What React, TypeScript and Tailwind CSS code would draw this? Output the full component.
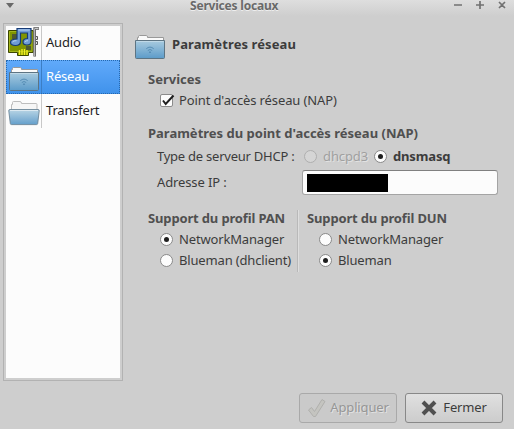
import React from "react";

function Folder({ network = false, open = false }: { network?: boolean; open?: boolean }) {
  return (
    <svg width="32" height="26" viewBox="0 0 32 26" className="block shrink-0">
      <defs>
        <linearGradient id="folderBlue" x1="0" y1="0" x2="0" y2="1">
          <stop offset="0" stopColor="#a9cbdf" />
          <stop offset="1" stopColor="#5c9bc9" />
        </linearGradient>
        <linearGradient id="openBlue" x1="0" y1="0" x2="0" y2="1">
          <stop offset="0" stopColor="#b9d5e5" />
          <stop offset="1" stopColor="#649fcb" />
        </linearGradient>
      </defs>
      {open ? (
        <>
          <path d="M3.500 10V4.500H4.500V2.500Q4.500 1.500 5.500 1.500H12Q13.500 1.500 13.500 3.500H28Q29 3.500 29 4.500V10" fill="#f6f6f6" stroke="#bdbdbd" />
          <path d="M.8 11Q.5 9.500 2 9.500H30Q31.500 9.500 31.200 11L29.700 23.500Q29.600 24.600 28.500 24.600H3.500Q2.400 24.600 2.300 23.500Z" fill="url(#openBlue)" stroke="#6c8697" strokeWidth=".9" />
          <path d="M2 10.500H30" stroke="#dbe9f1" />
        </>
      ) : (
        <>
          <path d="M3.500 7V3.500H4.500V2.500Q4.500 1.500 5.500 1.500H12.500Q13.500 1.500 13.500 3.500H29.500V7Z" fill="#fafafa" stroke="#999" />
          <path d="M1.500 6.500H30.500V23.500Q30.500 24.500 29.500 24.500H2.500Q1.500 24.500 1.500 23.500Z" fill="url(#folderBlue)" stroke="#5d7483" />
          <path d="M2.500 7.500H29.500" stroke="#c0d9e7" />
        </>
      )}
      {network && (
        <g fill="none" stroke="#5088b0" strokeWidth=".9">
          <path d="M12.300 14.700Q16 11.500 19.700 14.700M13.800 16.500Q16 14.500 18.200 16.500" />
          <circle cx="16" cy="18.200" r=".5" fill="#5088b0" />
        </g>
      )}
    </svg>
  );
}

function SoundCard() {
  return (
    <svg width="33" height="32" viewBox="0 0 33 32" className="block shrink-0">
      <path d="M1.500 3.500H26V25.500H21.500V28.500H10.500V25.500H1.500Z" fill="#819500" stroke="#3c4600" />
      <path d="M2.500 4.500H25V24.500H2.500Z" fill="none" stroke="#a3b51b" />
      <path d="M5 7H11V12H5ZM19 19H24V23H19Z" fill="#4f5930" />
      <path d="M12.500 23V28M15 22V28M17.500 22V28M20 23V28" stroke="#f3ef22" strokeWidth="1.400" />
      <path d="M10 1.500H24V14.500Q24 18 20 18Q16 18 16 15Q16 11.500 20.500 11.500V6H13.500V14.500Q13.500 18.500 8.500 18.500Q3.500 18.500 3.500 15.300Q3.500 12 10 12Z" fill="#6e9bd5" stroke="#173b76" strokeWidth="1.200" />
      <path d="M11.300 3H22.800M5.500 15Q6.500 13.500 9.500 13.700M17.700 15Q18.700 13.500 21 13.700" stroke="#b9d3f3" fill="none" />
      <path d="M32 1.500H27.700V29.500" fill="none" stroke="#555" strokeWidth="2.600" />
      <path d="M31.500 1.500H27.700V29" fill="none" stroke="#c9c9c9" strokeWidth="1" />
      <path d="M29 9.500H30.500V12.500H29M29 14.500H30.500V17.500H29" fill="#ddd" stroke="#555" />
    </svg>
  );
}

function Radio({ checked = false, disabled = false }: { checked?: boolean; disabled?: boolean }) {
  return (
    <span
      className={
        "flex size-[13px] shrink-0 items-center justify-center rounded-full border " +
        (disabled ? "border-[#afafaf] bg-[#d5d5d5]" : "border-[#898989] bg-[#fcfcfc]")
      }
    >
      {checked && <span className="size-[5px] rounded-full bg-[#1e1e1e]" />}
    </span>
  );
}

function Option({ label, checked = false }: { label: string; checked?: boolean }) {
  return (
    <div className="flex h-[21px] items-center gap-[6px] pl-3">
      <Radio checked={checked} />
      <span className="pb-[2px] tracking-[-0.16px]">{label}</span>
    </div>
  );
}

function Entry({ label, icon, selected = false }: { label: string; icon: React.ReactNode; selected?: boolean }) {
  return (
    <div
      className={
        "flex h-[34px] " +
        (selected
          ? "bg-linear-to-b from-[#61aafb] to-[#3f92eb] text-white outline-1 -outline-offset-1 outline-dotted outline-[#2668ae]"
          : "text-[#1f1f1f]")
      }
    >
      <div className={"flex w-9 shrink-0 items-center justify-center border-r " + (selected ? "border-[#3c7ec5]" : "border-[#c8c8c8]")}>
        {icon}
      </div>
      <span className="flex items-center pb-[3px] pl-1 tracking-[-0.2px]">{label}</span>
    </div>
  );
}

export default function App() {
  return (
    <div className="flex h-[429px] w-[514px] flex-col overflow-hidden bg-[#cecece] font-['Noto_Sans','Open_Sans',sans-serif] text-[13px] leading-[18px] whitespace-nowrap text-[#3c3c3c]">
      <header className="flex h-[23px] shrink-0 items-start bg-linear-to-b from-[#dedede] to-[#cecece] to-70% text-[#696969]">
        <svg width="190" height="16" className="shrink-0">
          <path d="M6 3H14L10 8Z" fill="#696969" />
        </svg>
        <h1 className="w-[260px] text-[12px] leading-[11px] font-bold tracking-[-0.2px] [text-shadow:0_1px_0_#eeeeee]">Services locaux</h1>
        <svg width="64" height="16" fill="none" stroke="#727272" strokeWidth="1.700">
          <path d="M4 5H12M26 5H34M30 1V9M49 2L55 8M55 2L49 8" />
        </svg>
      </header>
      <div className="flex min-h-0 flex-1 pl-[3px]">
        <aside className="h-[358px] w-[120px] shrink-0 border border-[#b2b2b2] p-[2px]">
          <div className="h-full bg-[#fcfcfc]">
            <Entry label="Audio" icon={<SoundCard />} />
            <Entry label="Réseau" icon={<div className="pt-[4px] pl-px"><Folder network /></div>} selected />
            <Entry label="Transfert" icon={<div className="pt-[4px] pl-px"><Folder open /></div>} />
          </div>
        </aside>
        <main className="flex flex-1 flex-col pl-[11px]">
          <div className="flex h-[45px] items-center gap-[6px]">
            <div className="pt-[3px]"><Folder network /></div>
            <h2 className="pb-[3px] font-bold tracking-[0.1px]">Paramètres réseau</h2>
          </div>
          <div className="flex flex-1 flex-col pl-[14px]">
            <h3 className="h-[22px] leading-[22px] font-bold text-[#505050]">Services</h3>
            <div className="flex h-[21px] items-center gap-[6px] pl-3">
              <svg width="13" height="14" className="shrink-0 overflow-visible">
                <rect x=".5" y=".5" width="12" height="12" rx="1.500" fill="#fcfcfc" stroke="#8b8b8b" />
                <path d="M3 6.500L5.700 10L13.500 1.500" fill="none" stroke="#1e1e1e" strokeWidth="2" />
              </svg>
              <span className="pb-[2px] tracking-[-0.12px]">Point d'accès réseau (NAP)</span>
            </div>
            <h3 className="mt-[11px] h-[22px] leading-[22px] font-bold text-[#505050]">Paramètres du point d'accès réseau (NAP)</h3>
            <div className="flex h-[24px] items-center pl-[9px]">
              <span className="w-[147px] pb-px tracking-[-0.24px]">Type de serveur DHCP :</span>
              <Radio disabled />
              <span className="w-[57px] pb-px pl-[6px] tracking-[-0.1px] text-[#a0a0a0] [text-shadow:1px_1px_0_#e2e2e2]">dhcpd3</span>
              <Radio checked />
              <span className="pb-px pl-[6px] font-bold tracking-[-0.15px]">dnsmasq</span>
            </div>
            <div className="mt-[2px] flex h-[25px] items-center pl-[9px]">
              <span className="w-[145px] pb-[2px] tracking-[-0.12px]">Adresse IP :</span>
              <div className="flex h-[25px] w-[196px] items-center rounded-[3px] border border-[#a4a4a4] border-t-[#808080] bg-[#fcfcfc] pl-1">
                <div className="h-[18px] w-[81px] bg-black" />
              </div>
            </div>
            <div className="mt-[15px] flex h-[62px]">
              <section className="w-[149px]">
                <h3 className="h-[19px] leading-[17px] font-bold tracking-[-0.15px] text-[#505050]">Support du profil PAN</h3>
                <Option label="NetworkManager" checked />
                <Option label="Blueman (dhclient)" />
              </section>
              <div className="w-[2px] border-r border-l border-r-[#dedede] border-l-[#b9b9b9]" />
              <section className="pl-2">
                <h3 className="h-[19px] leading-[17px] font-bold tracking-[-0.15px] text-[#505050]">Support du profil DUN</h3>
                <Option label="NetworkManager" />
                <Option label="Blueman" checked />
              </section>
            </div>
          </div>
          <footer className="mb-[6px] flex h-[30px] justify-end gap-2 pr-[11px]">
            <button disabled className="flex w-[98px] items-center justify-center gap-[3px] rounded-[3px] border border-[#a9a9a9] bg-[#cacaca] text-[#969696] [text-shadow:1px_1px_0_#e2e2e2]">
              <svg width="19" height="20" viewBox="0 0 19 20">
                <path d="M1.500 12L4.500 9.500L7.500 13.500L15 1.500L18 3.500L8.500 18.500H6.500Z" fill="#c4c4c0" stroke="#b0b0ad" />
              </svg>
              <span className="pb-[2px] pl-px tracking-[-0.15px]">Appliquer</span>
            </button>
            <button className="flex w-[98px] items-center justify-center gap-[6px] rounded-[3px] border border-[#888888] bg-linear-to-b from-[#e0e0e0] to-[#cccccc]">
              <svg width="16" height="16" viewBox="0 0 16 16">
                <path d="M2 2L14 14M14 2L2 14" stroke="#505050" strokeWidth="4" />
              </svg>
              <span className="pb-[2px] tracking-[-0.15px]">Fermer</span>
            </button>
          </footer>
        </main>
      </div>
    </div>
  );
}
